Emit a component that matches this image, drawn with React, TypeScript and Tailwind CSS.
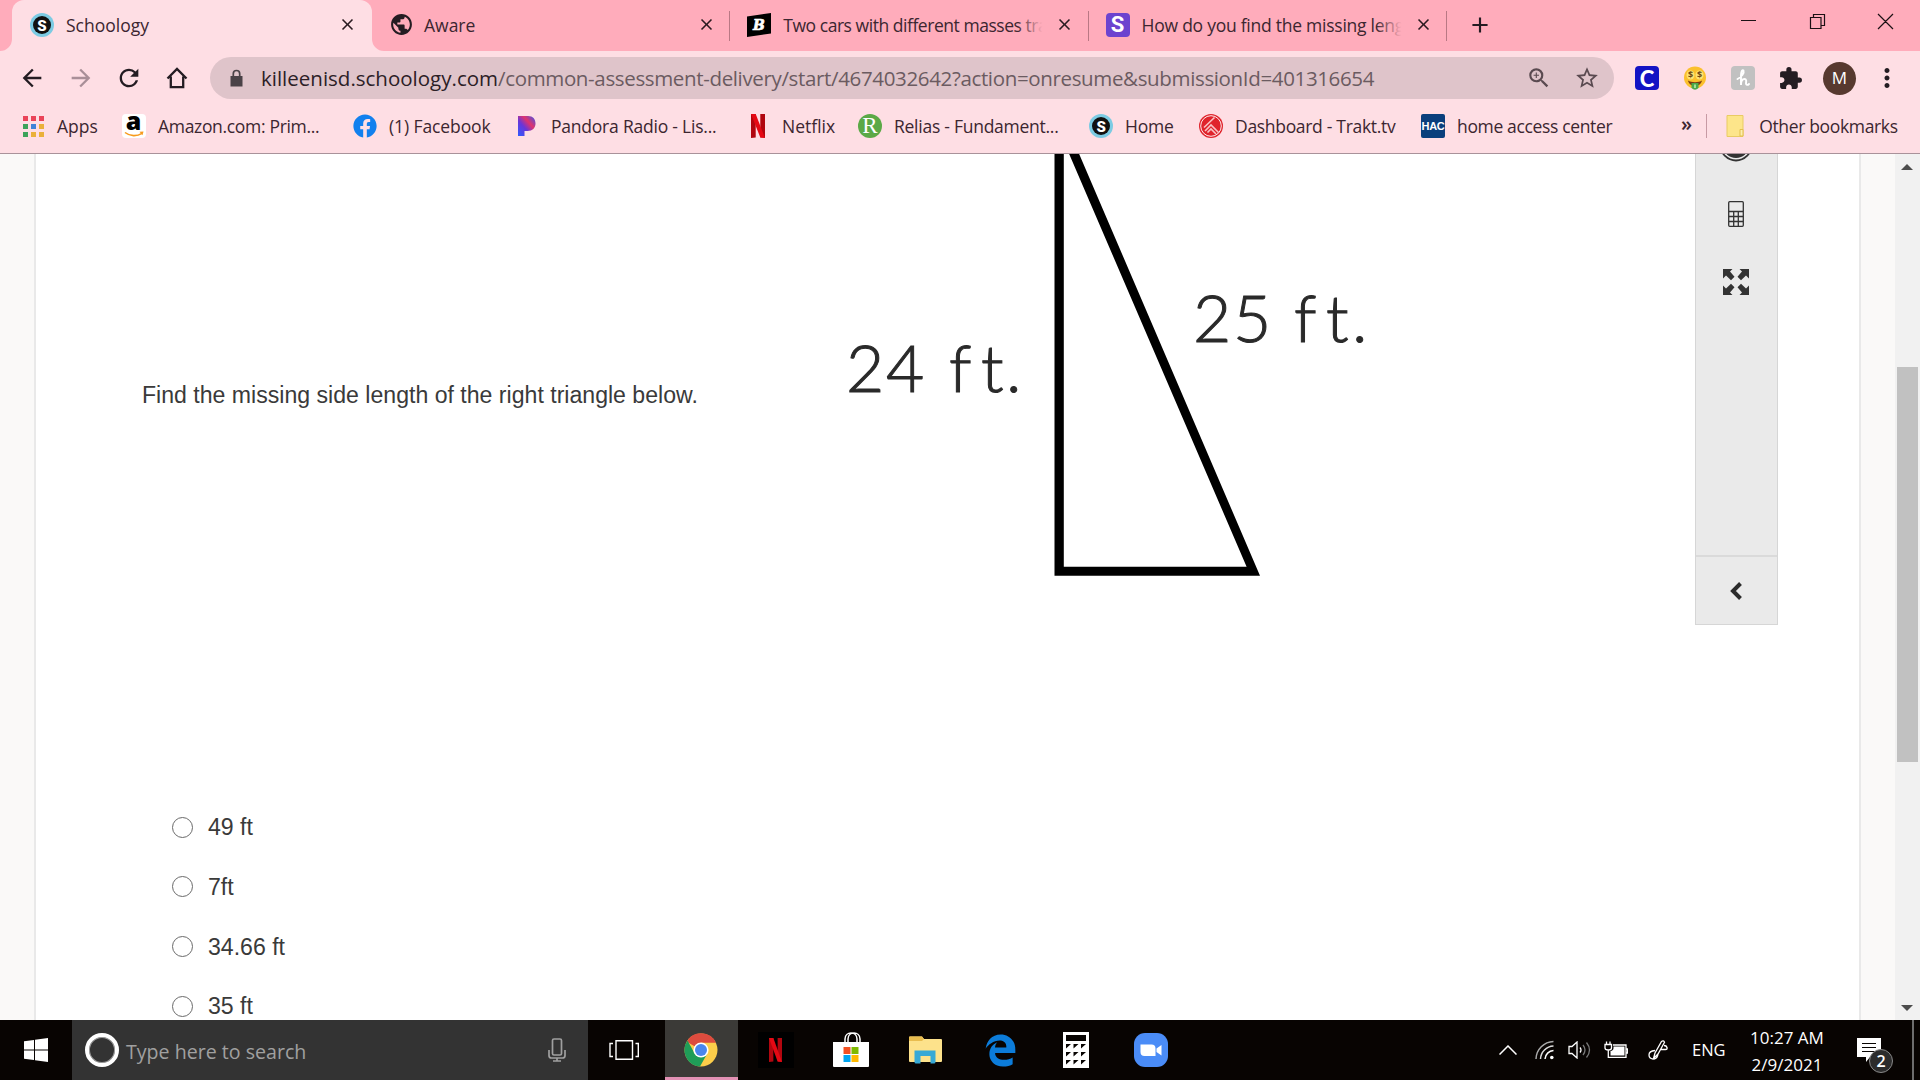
import type { ReactNode } from "react";
import clsx from "clsx";
import { FaFacebook } from "react-icons/fa";
import { FaEdgeLegacy } from "react-icons/fa6";
import {
  MdAdd,
  MdArrowBack,
  MdArrowForward,
  MdClose,
  MdExtension,
  MdMoreVert,
  MdPublic,
  MdRefresh,
  MdStarBorder,
  MdZoomIn,
} from "react-icons/md";

function SchoologyIcon() {
  return (
    <svg viewBox="0 0 24 24" className="size-6">
      <circle cx="12" cy="12" r="12" fill="#7ccbe3" />
      <circle cx="12" cy="12" r="9" fill="#111" />
      <text x="12" y="17.5" textAnchor="middle" fontSize="15" fontWeight="900" fill="#fff" fontFamily="Roboto, sans-serif">
        S
      </text>
    </svg>
  );
}

function BrainlyIcon() {
  return (
    <svg viewBox="0 0 24 24" className="size-6">
      <path d="M0 3.5 24 0v20.5L0 24z" fill="#000" />
      <text
        x="12"
        y="17"
        textAnchor="middle"
        fontSize="14"
        fontWeight="700"
        fontStyle="italic"
        fill="#fff"
        stroke="#fff"
        strokeWidth=".6"
        fontFamily="DejaVu Serif, serif"
      >
        B
      </text>
    </svg>
  );
}

function NetflixIcon({ className }: { className?: string }) {
  return (
    <svg viewBox="0 0 14 24" preserveAspectRatio="none" className={className}>
      <path d="M0 0h4.700v23.400L0 24zM9.300 0H14v24l-4.700-.6z" fill="#b1060f" />
      <path d="M0 0h4.700L14 24l-4.700-.6z" fill="#e50914" />
    </svg>
  );
}

function AmazonIcon() {
  return (
    <svg viewBox="0 0 24 24" className="size-6 overflow-visible">
      <rect width="24" height="24" rx="4" fill="#fff" />
      <text x="11.5" y="16" textAnchor="middle" fontSize="25" fontWeight="800" fill="#000" fontFamily="Open Sans, sans-serif">
        a
      </text>
      <path d="M3 18.500c5 4 12 4 17 .8" fill="none" stroke="#f79a1c" strokeWidth="1.600" />
      <path d="M17.500 17.800 21.500 17.500 20.500 21.300z" fill="#f79a1c" />
    </svg>
  );
}

function AppsIcon() {
  const colors = ["#ea4358", "#ea4358", "#ea4358", "#3da35a", "#3f83d8", "#eab03a", "#3da35a", "#eab03a", "#eab03a"];
  return (
    <div className="grid grid-cols-3 gap-[3px]">
      {colors.map((color, i) => (
        <span key={i} className="size-[5px]" style={{ backgroundColor: color }} />
      ))}
    </div>
  );
}

type TabProps = {
  title: string;
  icon: ReactNode;
  active?: boolean;
  divider?: boolean;
  fade?: boolean;
  titleClass?: string;
};

function Tab({ title, icon, active, divider, fade, titleClass }: TabProps) {
  return (
    <div
      className={clsx(
        "relative flex h-[51px] shrink-0 items-center pb-[2px]",
        active ? "w-[360px] rounded-t-xl bg-[#fedee4] pl-[18px]" : "w-[358.300px] pl-[17px]",
      )}
    >
      <span className="flex size-6 shrink-0 items-center justify-center">{icon}</span>
      <span
        className={clsx(
          "relative ml-3 w-[262px] shrink-0 text-[17.500px] leading-7 whitespace-nowrap text-[#3c2630]",
          titleClass,
        )}
      >
        {title}
        {fade && <span className="absolute inset-y-0 -right-1 w-8 bg-linear-to-r from-transparent to-[#ffacbb] to-80%" />}
      </span>
      <MdClose className="ml-[10px] size-[19px] shrink-0 text-[#2a1a20]" />
      {divider && <span className="absolute top-[11px] right-0 h-[30px] w-px bg-[#b97884]" />}
      {active && (
        <>
          <svg viewBox="0 0 12 12" className="absolute bottom-0 -left-3 size-3" fill="#fedee4">
            <path d="M12 0v12H0A12 12 0 0 0 12 0z" />
          </svg>
          <svg viewBox="0 0 12 12" className="absolute -right-3 bottom-0 size-3" fill="#fedee4">
            <path d="M0 0v12h12A12 12 0 0 1 0 0z" />
          </svg>
        </>
      )}
    </div>
  );
}

function TabStrip() {
  return (
    <div className="flex h-[51px] bg-[#ffacbb] pl-3">
      <Tab title="Schoology" icon={<SchoologyIcon />} active />
      <Tab title="Aware" icon={<MdPublic className="size-[25px] shrink-0 text-[#241c22]" />} titleClass="-indent-px" divider />
      <Tab
        title="Two cars with different masses tra"
        icon={<BrainlyIcon />}
        titleClass="tracking-[-0.460px]"
        divider
        fade
      />
      <Tab
        title="How do you find the missing leng"
        icon={
          <span className="flex size-6 items-center justify-center rounded bg-[#6c43cf] font-[Roboto] text-[22px] font-bold text-white">
            S
          </span>
        }
        titleClass="tracking-[-0.250px]"
        divider
        fade
      />
      <MdAdd className="mt-[12px] ml-[20px] size-[26px] text-[#241c22]" />
      <svg
        viewBox="0 0 154 20"
        className="mt-[12px] mr-[26px] ml-auto h-5 w-[154px]"
        fill="none"
        stroke="#1c1014"
        strokeWidth="1.200"
      >
        <path d="M1 8.500h15M70.500 5.500h10.500v11h-10.500zM73.500 5.500v-3h11v11h-3.500M138 2l15 15M153 2l-15 15" />
      </svg>
    </div>
  );
}

function Toolbar() {
  return (
    <div className="flex h-[54px] items-center pl-[18px] text-[#241c22]">
      <MdArrowBack className="size-7" />
      <MdArrowForward className="ml-[21px] size-7 text-[#a98f98]" />
      <MdRefresh className="ml-[20px] size-7" />
      <svg viewBox="0 0 28 28" className="ml-[20px] size-7" fill="none" stroke="currentColor" strokeWidth="2.300">
        <path d="M4.500 14.500 14 5l9.500 9.500M7.800 12.500v10.700h12.400V12.500" />
      </svg>
      <div className="ml-[19px] flex h-[42px] w-[1404px] items-center rounded-full bg-[#dfc4ca] pl-[17px] text-[#5a4a50]">
        <svg viewBox="0 0 19 19" className="size-[19px]">
          <path d="M3.500 7h12v10.500h-12z" fill="#4a4247" />
          <path d="M6.300 8V4.700a3.200 3.200 0 0 1 6.400 0V8" fill="none" stroke="#4a4247" strokeWidth="1.700" />
        </svg>
        <span className="ml-[15px] w-[1250px] text-[20.500px] whitespace-nowrap text-[#6b5b61]">
          <span className="text-[#2c2026]">killeenisd.schoology.com</span>
          <span className="tracking-[-0.350px]">
            /common-assessment-delivery/start/4674032642?action=onresume&amp;submissionId=401316654
          </span>
        </span>
        <MdZoomIn className="ml-[15px] size-[26px]" />
        <MdStarBorder className="ml-[22px] size-[26px]" />
      </div>
      <span className="ml-[21px] flex size-6 items-center justify-center rounded bg-[#1313c4] font-[Lato] text-[22px] font-black text-white">
        C
      </span>
      <MoneyFace />
      <span className="ml-6 flex size-6 items-center justify-center rounded bg-[#c1c1c1] text-white">
        <svg viewBox="0 0 24 24" className="size-6" fill="none" stroke="currentColor" strokeWidth="1.900" strokeLinecap="round">
          <path d="M6.500 13c4-2 7-6 6-8.500-1.500-1.500-2.500 2-2.500 5V19c0-3 1-6 3.500-6s1.500 3 1.500 4.500 1.500 2 3 .5" />
        </svg>
      </span>
      <MdExtension className="ml-[23px] size-[25px]" />
      <span className="ml-[20px] flex size-[33px] items-center justify-center rounded-full bg-[#57392f] text-[17px] text-white">
        M
      </span>
      <MdMoreVert className="ml-[16px] size-[30px]" />
    </div>
  );
}

function MoneyFace() {
  return (
    <svg viewBox="0 0 24 24" className="ml-6 size-6">
      <circle cx="12" cy="11.500" r="11" fill="#fbc02d" />
      <ellipse cx="7.500" cy="9" rx="4" ry="4.600" fill="#fde272" />
      <ellipse cx="16.500" cy="9" rx="4" ry="4.600" fill="#fde272" />
      <text x="7.500" y="12.300" textAnchor="middle" fontSize="9" fontWeight="700" fill="#6d4a12">
        $
      </text>
      <text x="16.500" y="12.300" textAnchor="middle" fontSize="9" fontWeight="700" fill="#6d4a12">
        $
      </text>
      <path d="M5 14.500c3 2.300 11 2.300 14 0-1 4-4 5.500-7 5.500s-6-1.500-7-5.500z" fill="#7a3a12" />
      <path d="M8.500 17h7v5q-3.500 3.500-7 0z" fill="#4aa84a" />
      <path d="M12 18.500v3.500" stroke="#c5efb0" strokeWidth="1.500" />
    </svg>
  );
}

type BookmarkProps = {
  icon: ReactNode;
  label: string;
  className: string;
};

// className carries the width, so every icon lands on its own column
function Bookmark({ icon, label, className }: BookmarkProps) {
  return (
    <div className={clsx("flex shrink-0 items-center whitespace-nowrap", className)}>
      <span className="mr-3 flex size-6 shrink-0 items-center justify-center">{icon}</span>
      {label}
    </div>
  );
}

function BookmarksBar() {
  return (
    <div className="flex h-[48px] items-center pb-[6px] pl-[21px] text-[17.500px] text-[#3c2630]">
      <Bookmark className="w-[101px]" icon={<AppsIcon />} label="Apps" />
      <Bookmark className="w-[231px] tracking-[-0.320px]" icon={<AmazonIcon />} label="Amazon.com: Prim..." />
      <Bookmark
        className="w-[162px] tracking-[-0.100px]"
        icon={<FaFacebook className="size-6 text-[#1280ee]" />}
        label="(1) Facebook"
      />
      <Bookmark
        className="w-[231px] tracking-[-0.220px]"
        icon={
          <svg viewBox="0 0 18 24" className="h-6 w-[18px]">
            <defs>
              <linearGradient id="pandora" x1="0" y1="1" x2="1" y2="0">
                <stop offset="0" stopColor="#2d5bff" />
                <stop offset=".4" stopColor="#6a35d8" />
                <stop offset=".65" stopColor="#e0336c" />
                <stop offset="1" stopColor="#3a52f0" />
              </linearGradient>
            </defs>
            <path d="M0 2h10c5 0 7.500 3 7.500 7.500S14.500 17 9.500 17H6.500v5H0z" fill="url(#pandora)" />
          </svg>
        }
        label="Pandora Radio - Lis..."
      />
      <Bookmark className="w-[112px]" icon={<NetflixIcon className="h-6 w-[14px]" />} label="Netflix" />
      <Bookmark
        className="w-[231px] tracking-[-0.260px]"
        icon={
          <span className="flex size-6 items-center justify-center rounded-full bg-[#5ba946] font-['Liberation_Serif'] text-[23px] tracking-normal text-white">
            R
          </span>
        }
        label="Relias - Fundament..."
      />
      <Bookmark className="w-[110px] tracking-[-0.200px]" icon={<SchoologyIcon />} label="Home" />
      <Bookmark
        className="w-[222px] tracking-[-0.310px]"
        icon={
          <svg viewBox="0 0 24 24" className="size-6">
            <circle cx="12" cy="12" r="12" fill="#e0242c" />
            <circle cx="12" cy="12" r="10.300" fill="none" stroke="#fff" strokeWidth=".9" />
            <path d="M5 13.500 15.500 3.500M6 17l6-6 8 8M8.500 18.500l3.500-3.500 5 5" fill="none" stroke="#f9c3c5" strokeWidth="1.600" />
          </svg>
        }
        label="Dashboard - Trakt.tv"
      />
      <Bookmark
        className="w-[260px] tracking-[-0.350px]"
        icon={
          <span className="flex size-6 items-center justify-center rounded-xs bg-[#0a3f7c] font-['Liberation_Sans'] text-[11px] font-bold tracking-tight text-white">
            HAC
          </span>
        }
        label="home access center"
      />
      <span className="-mt-1 text-[20px] font-semibold">»</span>
      <span className="ml-[14px] h-6 w-px bg-[#c79aa4]" />
      <Bookmark
        className="ml-[16px] tracking-[-0.340px]"
        icon={
          <svg viewBox="0 0 18 22" className="h-[22px] w-[18px]">
            <path d="M1 .5h16v21H1z" fill="#fde58a" stroke="#e9cb63" />
            <path d="M14 21v-6.500h3V21z" fill="#fdeeb0" stroke="#e3c04d" />
          </svg>
        }
        label="Other bookmarks"
      />
    </div>
  );
}

function Triangle() {
  return (
    <svg viewBox="830 154 560 440" className="h-[440px] w-[560px]" fontFamily="Lato, sans-serif">
      <path
        fillRule="evenodd"
        d="M1054.500 100V575.700H1260L1056 100zM1063.800 141.500V566.700H1246.600z"
        fill="#000"
      />
      <g fontSize="66" fontWeight="300" fill="#2a2a2a" stroke="#2a2a2a" strokeWidth="1">
        <text x="846 886 949 981 1006" y="391.500">
          24ft.
        </text>
        <text x="1193 1233 1294 1326 1352" y="342">
          25ft.
        </text>
      </g>
    </svg>
  );
}

function Tools() {
  return (
    <div className="flex h-[471px] w-[83px] shrink-0 flex-col items-center border border-t-0 border-[#d6d6d6] bg-[#eaeaea] pr-px">
      <svg viewBox="0 0 30 8" className="h-2 w-[30px]">
        <circle cx="15" cy="-9" r="15.500" fill="none" stroke="#333" strokeWidth="1.800" />
        <circle cx="15" cy="-9" r="13" fill="#333" />
      </svg>
      <svg viewBox="0 0 16 26" className="mt-[39px] h-[26px] w-4" fill="none" stroke="#333" strokeWidth="1.300">
        <rect x=".7" y=".7" width="14.600" height="24.600" rx="1" />
        <path d="M1 10.500h14M1 15.500h14M1 20.500h14M5.700 10.500V25M10.300 10.500V25" />
      </svg>
      <svg viewBox="0 0 26 26" className="mt-[42px] size-[26px]" fill="#333">
        <path d="M0 0h9.500L7 2.500 11.500 7.800 8 11.200 3 6.500 0 9.500zM26 0v9.500l-3-3-5 4.700-3.500-3.400L19 2.500 16.500 0zM0 26v-9.500l3 3 5-4.700 3.500 3.400L7 23.500 9.500 26zM26 26h-9.500l2.500-2.500-4.500-5.300 3.500-3.400 5 4.700 3-3z" />
      </svg>
      <div className="mt-auto -mr-px flex h-[69px] w-[81px] items-center justify-center border-t-2 border-[#dadada] pr-[2px]">
        <svg viewBox="0 0 12 18" className="h-[18px] w-3" fill="none" stroke="#2b2b2b" strokeWidth="4">
          <path d="M10.500 1.500 3 9l7.500 7.500" />
        </svg>
      </div>
    </div>
  );
}

const answers = ["49 ft", "7ft", "34.66 ft", "35 ft"];

function Page() {
  return (
    <div className="flex h-[866px] overflow-hidden bg-[#faf9f8] font-['Liberation_Sans',sans-serif] text-[#3a3a3a]">
      <main className="ml-[34px] w-[1827px] shrink-0 border-x-2 border-[#e9e9e9] bg-white">
        <div className="flex h-[659px]">
          <p className="mt-[227px] ml-[106px] w-[688px] text-[23.100px] leading-7 whitespace-nowrap">
            Find the missing side length of the right triangle below.
          </p>
          <Triangle />
          <div className="ml-[305px]">
            <Tools />
          </div>
        </div>
        <ul className="ml-[136px]">
          {answers.map((answer) => (
            <li key={answer} className="mb-[31.800px] flex h-7 items-center text-[23.100px] leading-7">
              <span className="mr-[15px] size-[21px] rounded-full border border-[#6a6a6a]" />
              {answer}
            </li>
          ))}
        </ul>
      </main>
      <div className="ml-auto flex w-[25px] flex-col items-center bg-[#f1f1f1]">
        <span className="mt-[10px] mr-px border-x-[6px] border-b-[6px] border-x-transparent border-b-[#4d4d4d]" />
        <span className="mt-[197px] h-[395px] w-[21px] bg-[#c1c1c1]" />
        <span className="mt-auto mr-px mb-[9px] border-x-[6px] border-t-[6px] border-x-transparent border-t-[#4d4d4d]" />
      </div>
    </div>
  );
}

function TaskItem({ children, active }: { children: ReactNode; active?: boolean }) {
  return (
    <div
      className={clsx(
        "mr-[2px] flex h-[60px] w-[73px] items-center justify-center pr-[2px]",
        active && "border-b-[3px] border-[#e291b4] bg-[#3b3a37] pt-[3px]",
      )}
    >
      {children}
    </div>
  );
}

function Taskbar() {
  return (
    <footer className="flex h-[60px] items-center bg-[#080402] text-white">
      <div className="flex w-[72px] justify-center">
        <svg viewBox="0 0 24 24" className="size-6" fill="#fff">
          <path d="M0 3.300 10 2v9.500H0zM11 1.800 24 0v11.500H11zM0 12.500h10V22L0 20.700zM11 12.500h13V24l-13-1.800z" />
        </svg>
      </div>
      <div className="flex h-[60px] w-[516px] items-center bg-[#333] pl-[13px] text-[#a0a0a0]">
        <span className="size-[34px] rounded-full border-[4px] border-white shadow-[inset_0_0_0_1px_#999]" />
        <span className="mt-[3px] ml-[7px] text-[19.600px]">Type here to search</span>
        <svg viewBox="0 0 18 24" className="mr-[22px] ml-auto h-6 w-[18px]" fill="none" stroke="#a0a0a0" strokeWidth="1.700">
          <rect x="4.500" y="1" width="9" height="16" rx="1.500" />
          <path d="M1 12v5.500c0 1.500 1 2.500 2.500 2.500h11c1.500 0 2.500-1 2.500-2.500V12M9 20v3M5 23h8" />
        </svg>
      </div>
      <div className="flex w-[77px] justify-center pr-[5px]">
        <svg viewBox="0 0 30 20" className="h-5 w-[30px]" fill="none" stroke="#fff" strokeWidth="1.400">
          <path d="M7 .7h16.500v18.600H7zM4 3.500H1v13h3M26.500 3.500h2.800v13h-2.800" />
        </svg>
      </div>
      <TaskItem active>
        <svg viewBox="0 0 34 34" className="size-[34px]">
          <circle cx="17" cy="17" r="16.500" fill="#fccd4a" />
          <path d="M17 17 2.700 8.700A16.500 16.500 0 0 1 32 9.700H17z" fill="#dd4b3e" />
          <path d="M3.500 7.500A16.500 16.500 0 0 0 16 33.500l7.300-12.900L17 17l-6.300 3.600z" fill="#1f9d58" />
          <circle cx="17" cy="17" r="7.600" fill="#fff" />
          <circle cx="17" cy="17" r="6" fill="#4a86ee" />
        </svg>
      </TaskItem>
      <TaskItem>
        <span className="flex size-[36px] items-center justify-center bg-black">
          <NetflixIcon className="h-6 w-[13px]" />
        </span>
      </TaskItem>
      <TaskItem>
        <svg viewBox="0 0 36 36" className="size-9">
          <path d="M12 11V7c0-8 12-8 12 0v4M15 11V7c0-8 12-8 12 0v4" fill="none" stroke="#fff" strokeWidth="1.500" />
          <path d="M0 10h36v24q0 1-1 1H1q-1 0-1-1z" fill="#fff" />
          <path d="M10.500 15h7v7h-7z" fill="#f25022" />
          <path d="M18.500 15h7v7h-7z" fill="#7fba00" />
          <path d="M10.500 23h7v7h-7z" fill="#00a4ef" />
          <path d="M18.500 23h7v7h-7z" fill="#ffb900" />
        </svg>
      </TaskItem>
      <TaskItem>
        <svg viewBox="0 0 33 28" className="h-7 w-[33px]">
          <path d="M0 1.500Q0 .5 1 .5h12l2 2.500h17q1 0 1 1v21q0 1-1 1H1q-1 0-1-1z" fill="#fde28b" />
          <path d="M0 1.500Q0 .5 1 .5h12l2 2.500-2 2H0z" fill="#e9bd4f" />
          <path d="M5.500 14.500h21V26q0 1.500-1.500 1.500h-3.500V20h-10v7.500H7Q5.500 27.500 5.500 26z" fill="#37a9d6" />
        </svg>
      </TaskItem>
      <TaskItem>
        <FaEdgeLegacy className="size-[33px] text-[#0c7cd9]" />
      </TaskItem>
      <TaskItem>
        <svg viewBox="0 0 26 36" className="h-9 w-[26px]">
          <path d="M0 0h26v36H0z" fill="#fff" />
          <path
            d="M3 3h20v6H3zM3 12h5l-5 4.500zM10.500 12h5l-5 4.500zM18 12h5l-5 4.500zM3 20h5l-5 4.500zM10.500 20h5l-5 4.500zM18 20h5l-5 4.500zM3 28h5l-5 4.500zM10.500 28h5l-5 4.500zM18 28h5l-5 4.500z"
            fill="#080402"
          />
        </svg>
      </TaskItem>
      <TaskItem>
        <svg viewBox="0 0 34 34" className="size-[34px]">
          <rect width="34" height="34" rx="11" fill="#4a8cf7" />
          <path d="M6.500 11.500h11q4 0 4 4V23h-11q-4 0-4-4zM22.500 15.500l5-3.500v10.500l-5-3.500z" fill="#fff" />
        </svg>
      </TaskItem>
      <Tray />
    </footer>
  );
}

function Tray() {
  return (
    <div className="ml-auto flex h-[60px] items-center">
      <svg viewBox="0 0 18 10" className="h-[10px] w-[18px]" fill="none" stroke="#fff" strokeWidth="1.500">
        <path d="m.5 9.500 8.500-8.500 8.500 8.500" />
      </svg>
      <svg viewBox="0 0 20 20" className="ml-[18px] size-5" fill="none" stroke="#aaa" strokeWidth="1.500">
        <path d="M1 19A18 18 0 0 1 18.500 1.500" />
        <path d="M5.500 19A13.500 13.500 0 0 1 18.500 6" stroke="#ddd" />
        <path d="M10 19a9 9 0 0 1 8.500-8.500" stroke="#fff" />
        <circle cx="16.800" cy="17.500" r="1.800" fill="#fff" stroke="none" />
      </svg>
      <svg viewBox="0 0 23 18" className="ml-[13px] h-[18px] w-[23px]" fill="none" stroke="#fff" strokeWidth="1.300">
        <path d="M1 5.500h3L9 1v16l-5-4.500H1zM12 6.500q2 2.500 0 5" />
        <path d="M15 4q4 5 0 10M18.500 1.500q6 7.500 0 15" stroke="#777" />
      </svg>
      <svg viewBox="0 0 24 18" className="ml-[13px] h-[18px] w-6" fill="none" stroke="#fff" strokeWidth="1.300">
        <path d="M1 3.500h6.500V7q0 2-3.200 2T1 7zM2.500 3.500V.5M6 3.500V.5M4.300 9v7.300H22V4H9M22 8h1.500v4H22" />
        <path d="M9.500 5.500h11v9h-14V10q3-.5 3-3z" fill="#fff" stroke="none" />
      </svg>
      <svg viewBox="0 0 20 20" className="ml-5 size-5" fill="none" stroke="#fff" strokeWidth="1.300">
        <path d="M5.500 18.500 7 13l6.500-11.500q2-1.500 3 .8L10 14zM7 10.500q-6 .5-6 4.500t5 4q3.500-.5 4-5M12.500 9.500h5q2 0 1.500-2t-3-2" />
      </svg>
      <span className="ml-[24px] w-[36px] text-[16.500px]">ENG</span>
      <div className="ml-[20px] w-[78px] pt-px text-center text-[17px] leading-[27px] whitespace-nowrap">
        10:27 AM
        <br />
        2/9/2021
      </div>
      <div className="relative ml-[31px] h-6 w-6">
        <svg viewBox="0 0 24 25" className="h-[25px] w-6">
          <path d="M0 0h24v19H13l-4 5v-5H0z" fill="#fff" />
          <path d="M5 5.500h14M5 9.500h14M5 13.500h14" stroke="#080402" strokeWidth="1.200" />
        </svg>
        <span className="absolute top-[11px] left-[12px] flex size-6 items-center justify-center rounded-full border border-[#888] bg-[#2c2c2c] text-[16px] font-semibold">
          2
        </span>
      </div>
      <span className="ml-[31px] h-[60px] w-[8px] border-l-2 border-[#6d6d6d]" />
    </div>
  );
}

export default function App() {
  return (
    <div className="h-[1080px] w-[1920px] overflow-hidden bg-white font-['Open_Sans',sans-serif]">
      <header className="h-[154px] border-b border-[#a9929a] bg-[#fedee4]">
        <TabStrip />
        <Toolbar />
        <BookmarksBar />
      </header>
      <Page />
      <Taskbar />
    </div>
  );
}
